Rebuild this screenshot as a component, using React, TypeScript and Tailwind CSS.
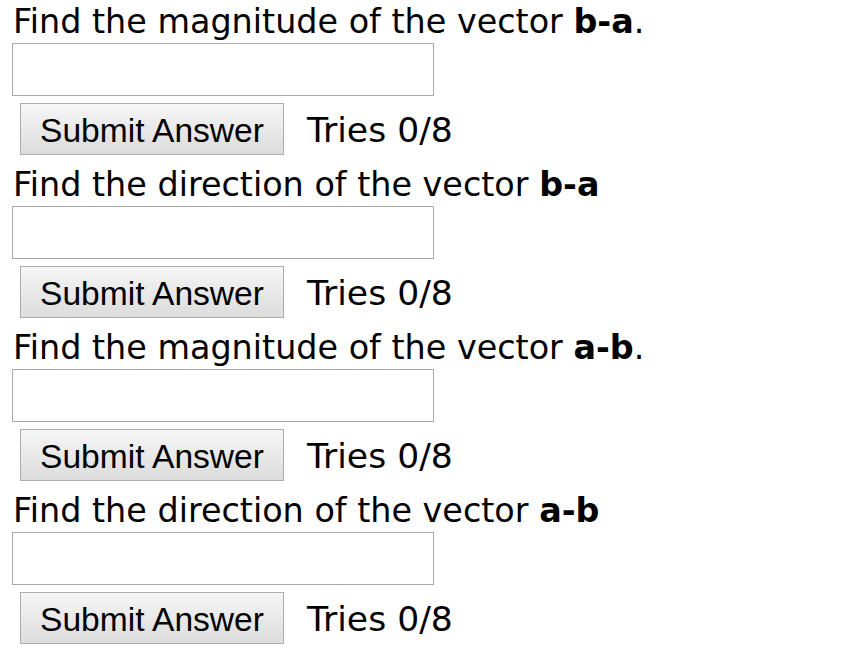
import React from "react";

const questions = [
  { text: "Find the magnitude of the vector ", bold: "b-a", tail: "." },
  { text: "Find the direction of the vector ", bold: "b-a", tail: "" },
  { text: "Find the magnitude of the vector ", bold: "a-b", tail: "." },
  { text: "Find the direction of the vector ", bold: "a-b", tail: "" },
];

function Question({ text, bold, tail }: { text: string; bold: string; tail: string }) {
  return (
    <div className="flex flex-col pb-[8px]">
      <div className="pl-[13px] pt-[1.5px] text-[33.4px] leading-[40px] whitespace-nowrap text-black">
        {text}
        <b className="font-bold">{bold}</b>
        {tail}
      </div>
      <input
        type="text"
        className="mt-[1.5px] ml-[12px] h-[52.5px] w-[422px] border border-[#a9a9a9] bg-white outline-none"
      />
      <div className="mt-[7.5px] flex items-center">
        <button
          type="button"
          className="ml-[20px] h-[52px] w-[264px] border border-[#adadad] bg-gradient-to-b from-[#f6f6f6] to-[#dcdcdc] pt-[2px] text-[33.6px] text-black [font-family:'Liberation_Sans',Arial,sans-serif]"
        >
          Submit Answer
        </button>
        <span className="ml-[23px] pt-[2px] text-[34.6px] leading-[40px] text-black">Tries 0/8</span>
      </div>
    </div>
  );
}

export default function App() {
  return (
    <div className="min-h-screen bg-white [font-family:'DejaVu_Sans',Verdana,sans-serif]">
      {questions.map((q, i) => (
        <Question key={i} {...q} />
      ))}
    </div>
  );
}
